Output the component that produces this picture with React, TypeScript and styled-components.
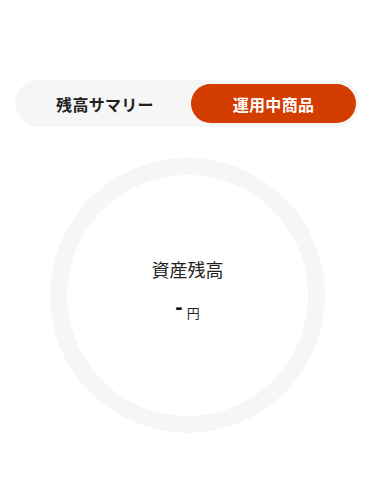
import { useState } from "react";
import styled, { createGlobalStyle } from "styled-components";

const GlobalStyle = createGlobalStyle`
  html, body {
    margin: 0;
    padding: 0;
    background: #ffffff;
  }
  body {
    font-family: "Noto Sans CJK JP", "Noto Sans", sans-serif;
    color: #222222;
  }
`;

const Page = styled.div`
  width: 375px;
  display: flex;
  flex-direction: column;
  align-items: center;
  padding-top: 80px;
`;

const Toggle = styled.div`
  width: 345px;
  height: 47px;
  box-sizing: border-box;
  padding: 4px;
  background-color: #f6f6f6;
  border-radius: 24px;
  display: grid;
  grid-template-columns: 1fr 165px;
  align-items: stretch;
`;

const Tab = styled.button<{ $active: boolean }>`
  border: none;
  outline: none;
  cursor: pointer;
  border-radius: 20px;
  font-family: "Noto Sans CJK JP", sans-serif;
  font-size: 16px;
  font-weight: 700;
  letter-spacing: 0.3px;
  padding: 0;
  background-color: ${(p) => (p.$active ? "#d43d00" : "transparent")};
  color: ${(p) => (p.$active ? "#ffffff" : "#222222")};
`;

const Chart = styled.div`
  margin-top: 31px;
  width: 275px;
  height: 275px;
  box-sizing: border-box;
  border: 17px solid #f6f6f6;
  border-radius: 50%;
  display: flex;
  flex-direction: column;
  align-items: center;
  justify-content: center;
`;

const Label = styled.div`
  font-size: 18px;
  font-weight: 400;
  line-height: 26px;
  color: #222222;
  margin-top: -13px;
`;

const Amount = styled.div`
  margin-top: 22px;
  display: flex;
  align-items: center;
  gap: 4px;
  height: 18px;
`;

const Value = styled.span`
  font-family: "Liberation Sans", sans-serif;
  font-size: 22px;
  font-weight: 700;
  line-height: 18px;
  color: #111111;
  margin-top: -12px;
`;

const Yen = styled.span`
  font-size: 13px;
  line-height: 18px;
  color: #222222;
`;

export default function App() {
  const [tab, setTab] = useState(1);
  return (
    <>
      <GlobalStyle />
      <Page>
        <Toggle>
          <Tab $active={tab === 0} onClick={() => setTab(0)}>
            残高サマリー
          </Tab>
          <Tab $active={tab === 1} onClick={() => setTab(1)}>
            運用中商品
          </Tab>
        </Toggle>
        <Chart>
          <Label>資産残高</Label>
          <Amount>
            <Value>-</Value>
            <Yen>円</Yen>
          </Amount>
        </Chart>
      </Page>
    </>
  );
}
